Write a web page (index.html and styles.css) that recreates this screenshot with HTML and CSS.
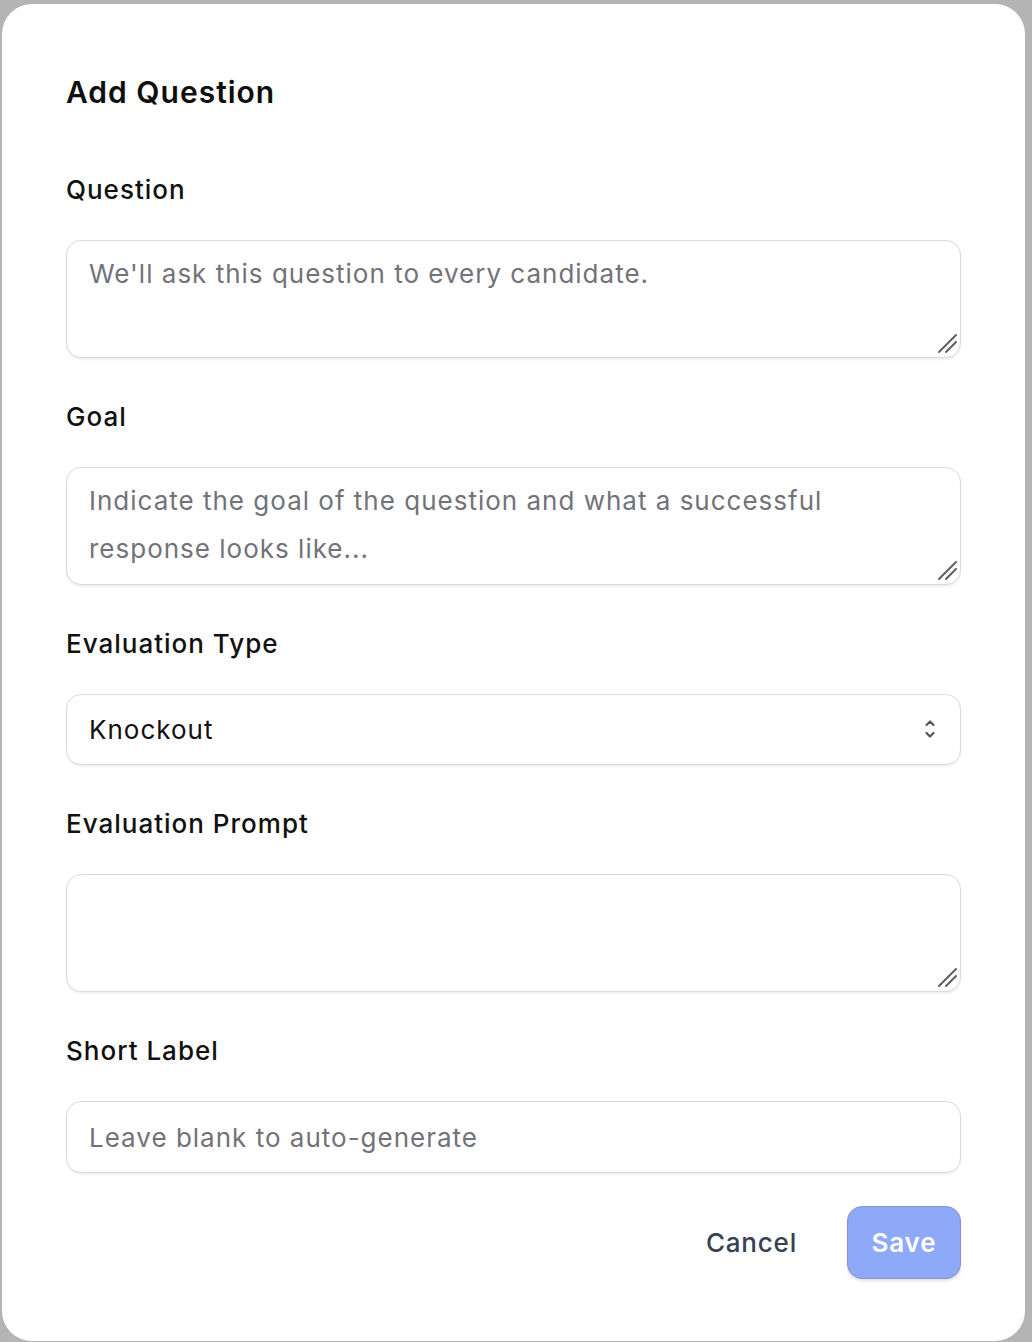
FILE: index.html
```html
<!DOCTYPE html>
<html lang="en">
<head>
    <meta charset="UTF-8">
    <meta name="viewport" content="width=device-width, initial-scale=1.0">
    <title>Add Question</title>
    <link rel="stylesheet" href="styles.css">
</head>
<body>
    <div class="modal">
        <h2 class="modal-title">Add Question</h2>

        <div class="field">
            <label for="question">Question</label>
            <div class="textarea-wrap">
                <textarea id="question" rows="2" placeholder="We'll ask this question to every candidate."></textarea>
                <svg class="grip" width="22" height="22" viewBox="0 0 22 22">
                    <path d="M3 20 L20 3 M10 20 L20 10" stroke="#5f5f66" stroke-width="2" stroke-linecap="round"/>
                </svg>
            </div>
        </div>

        <div class="field">
            <label for="goal">Goal</label>
            <div class="textarea-wrap">
                <textarea id="goal" rows="2" placeholder="Indicate the goal of the question and what a successful response looks like..."></textarea>
                <svg class="grip" width="22" height="22" viewBox="0 0 22 22">
                    <path d="M3 20 L20 3 M10 20 L20 10" stroke="#5f5f66" stroke-width="2" stroke-linecap="round"/>
                </svg>
            </div>
        </div>

        <div class="field">
            <label for="eval-type">Evaluation Type</label>
            <div class="select-wrap">
                <select id="eval-type">
                    <option>Knockout</option>
                    <option>Scored</option>
                </select>
                <svg class="select-icon" width="14" height="24" viewBox="0 0 14 24">
                    <path d="M3.5 8 L7 4.5 L10.5 8" fill="none" stroke="#55555c" stroke-width="2.2" stroke-linecap="round" stroke-linejoin="round"/>
                    <path d="M3.5 16 L7 19.5 L10.5 16" fill="none" stroke="#55555c" stroke-width="2.2" stroke-linecap="round" stroke-linejoin="round"/>
                </svg>
            </div>
        </div>

        <div class="field">
            <label for="prompt">Evaluation Prompt</label>
            <div class="textarea-wrap">
                <textarea id="prompt" rows="2"></textarea>
                <svg class="grip" width="22" height="22" viewBox="0 0 22 22">
                    <path d="M3 20 L20 3 M10 20 L20 10" stroke="#5f5f66" stroke-width="2" stroke-linecap="round"/>
                </svg>
            </div>
        </div>

        <div class="field field-last">
            <label for="short-label">Short Label</label>
            <input type="text" id="short-label" placeholder="Leave blank to auto-generate">
        </div>

        <div class="actions">
            <button class="btn-cancel">Cancel</button>
            <button class="btn-save" disabled>Save</button>
        </div>
    </div>
</body>
</html>
```

FILE: styles.css
```css
html, body {
    margin: 0;
    height: 100%;
}
body {
    font-family: Inter, "Noto Sans", sans-serif;
    background-color: #b4b4b4;
    color: #111827;
    overflow: hidden;
}
.modal {
    margin: 4px 7px 0 2px;
    background-color: #ffffff;
    border-radius: 30px;
    padding: 68px 64px 62px 64px;
    box-sizing: border-box;
}
.modal-title {
    margin: 0 0 60px 0;
    font-size: 30px;
    line-height: 40px;
    font-weight: 600;
    letter-spacing: 1px;
    color: #0f0f10;
}
.field {
    display: flex;
    flex-direction: column;
    gap: 32px;
    margin-bottom: 41px;
}
.field-last {
    margin-bottom: 0;
}
.field label {
    font-size: 26px;
    line-height: 36px;
    font-weight: 500;
    letter-spacing: 1px;
    color: #111111;
}
textarea,
input,
select {
    font-family: inherit;
    font-size: 26px;
    letter-spacing: 1px;
    color: #111111;
    background-color: #ffffff;
    border: 1.5px solid #d9d9dc;
    border-radius: 15px;
    box-shadow: 0 2px 2px rgba(0, 0, 0, 0.06);
    box-sizing: border-box;
    width: 100%;
    outline: none;
    margin: 0;
    display: block;
}
.textarea-wrap,
.select-wrap {
    position: relative;
}
textarea {
    height: 118px;
    line-height: 48px;
    padding: 9px 60px 9px 22px;
    resize: none;
}
textarea::placeholder,
input::placeholder {
    color: #72727a;
}
.grip {
    position: absolute;
    right: 3px;
    bottom: 4px;
    pointer-events: none;
}
input {
    height: 72px;
    padding: 0 22px;
}
select {
    height: 71px;
    padding: 0 22px;
    appearance: none;
    -webkit-appearance: none;
}
.select-icon {
    position: absolute;
    right: 24px;
    top: 23px;
    pointer-events: none;
}
.actions {
    display: flex;
    justify-content: flex-end;
    align-items: center;
    gap: 26px;
    margin-top: 33px;
}
.actions button {
    font-family: inherit;
    font-size: 26px;
    letter-spacing: 0.8px;
    height: 73px;
    border-radius: 15px;
    cursor: pointer;
}
.btn-cancel {
    background: none;
    border: none;
    padding: 0 24px;
    font-weight: 500;
    color: #374151;
}
.btn-save {
    width: 114px;
    background-color: #8ea9f7;
    border: 1.5px solid #8f93c9;
    color: #ffffff;
    font-weight: 600;
    padding: 0;
    box-shadow: 0 2px 3px rgba(0, 0, 0, 0.12);
}
```
